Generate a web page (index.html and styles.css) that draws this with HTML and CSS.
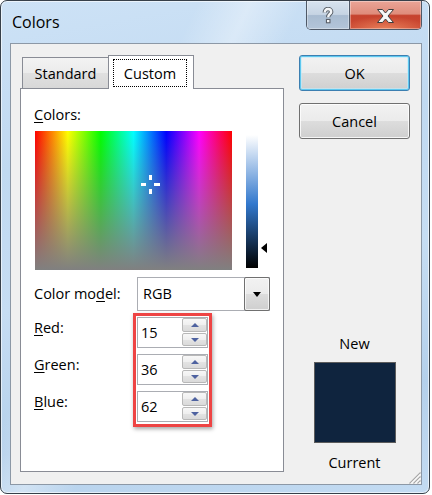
FILE: index.html
```html
<!DOCTYPE html>
<html>
<head>
<meta charset="utf-8">
<title>Colors</title>
<link rel="stylesheet" href="styles.css">
</head>
<body>
<div class="window">
  <div class="titlebar">
    <div class="title">Colors</div>
    <div class="caption">
      <div class="cbtn help">
        <svg width="12" height="17" viewBox="0 0 12 17">
          <path d="M2.8 5.6 C2.8 3.2 4.4 2 6 2 C7.9 2 9.2 3.2 9.2 4.9 C9.2 6.9 6.2 7.2 6.2 10.2" fill="none" stroke="#5a6068" stroke-width="4.4" stroke-linejoin="round"/>
          <rect x="3.9" y="11.9" width="4.6" height="4.4" fill="#5a6068"/>
          <path d="M2.8 5.6 C2.8 3.2 4.4 2 6 2 C7.9 2 9.2 3.2 9.2 4.9 C9.2 6.9 6.2 7.2 6.2 10.2" fill="none" stroke="#f4f6f8" stroke-width="2.4" stroke-linejoin="round"/>
          <rect x="5" y="13" width="2.4" height="2.2" fill="#f4f6f8"/>
        </svg>
      </div>
      <div class="cbtn close">
        <svg width="19" height="16" viewBox="0 0 19 16">
          <polygon points="1.5,1.5 6.5,1.5 9.5,5 12.5,1.5 17.5,1.5 12,8 17.5,14.5 12.5,14.5 9.5,11 6.5,14.5 1.5,14.5 7,8" fill="#f6f6f6" stroke="#3e3e3e" stroke-width="1" stroke-linejoin="round"/>
        </svg>
      </div>
    </div>
  </div>
  <div class="client">
    <div class="tabctl">
      <div class="tabs">
        <div class="tab">Standard</div>
        <div class="tab sel"><span class="focus">Custom</span></div>
      </div>
      <div class="panel">
        <div class="clabel"><u>C</u>olors:</div>
        <div class="picker">
          <div class="spectrum">
            <svg class="cross" width="19" height="19" viewBox="0 0 19 19">
              <rect x="8" y="0" width="3" height="5" fill="#fff"/>
              <rect x="8" y="14" width="3" height="5" fill="#fff"/>
              <rect x="0" y="8" width="5" height="3" fill="#fff"/>
              <rect x="13" y="8" width="6" height="3" fill="#fff"/>
            </svg>
          </div>
          <div class="lum"></div>
          <div class="arrow"></div>
        </div>
        <div class="model">
          <div class="mlabel">Color mo<u>d</u>el:</div>
          <div class="combo"><span class="cval">RGB</span><div class="dd"><i></i></div></div>
        </div>
        <div class="rgb">
          <div class="labels">
            <div class="lrow"><u>R</u>ed:</div>
            <div class="lrow"><u>G</u>reen:</div>
            <div class="lrow"><u>B</u>lue:</div>
          </div>
          <div class="hl">
            <div class="spin"><span class="sval">15</span><div class="sbtns"><div class="sb up"><i></i></div><div class="sb dn"><i></i></div></div></div>
            <div class="spin"><span class="sval">36</span><div class="sbtns"><div class="sb up"><i></i></div><div class="sb dn"><i></i></div></div></div>
            <div class="spin"><span class="sval">62</span><div class="sbtns"><div class="sb up"><i></i></div><div class="sb dn"><i></i></div></div></div>
          </div>
        </div>
      </div>
    </div>
    <div class="side">
      <div class="btn ok">OK</div>
      <div class="btn cancel">Cancel</div>
      <div class="new">New</div>
      <div class="swatch"></div>
      <div class="cur">Current</div>
    </div>
    <svg class="grip" width="13" height="13" viewBox="0 0 13 13">
      <path d="M12.5 1.5 L1.5 12.5 M12.5 5.5 L5.5 12.5 M12.5 9.5 L9.5 12.5" stroke="#a9a9a9" stroke-width="1.2"/>
      <path d="M12.5 3 L3 12.5 M12.5 7 L7 12.5 M12.5 11 L11 12.5" stroke="#ffffff" stroke-width="1"/>
    </svg>
  </div>
</div>
</body>
</html>
```

FILE: styles.css
```css
* { box-sizing: border-box; }
html, body { margin: 0; padding: 0; background: #ffffff; }
body {
  font-family: "Open Sans", "Noto Sans", sans-serif;
  font-size: 14.5px;
  line-height: 20px;
  color: #000;
}
u { text-decoration: underline; text-decoration-thickness: 1px; text-underline-offset: 2px; }

.window {
  width: 430px;
  height: 494px;
  border: 1px solid #37404a;
  border-radius: 7px;
  background:
    linear-gradient(115deg, rgba(255,255,255,0) 30%, rgba(255,255,255,.35) 38%, rgba(255,255,255,0) 46%),
    linear-gradient(170deg, #cde2f6 0%, #c0d9f1 30%, #c6ddf3 55%, #b4d0eb 80%, #c3dbf2 100%);
  box-shadow: inset 0 0 0 1px rgba(255,255,255,.6);
  display: flex;
  flex-direction: column;
  overflow: hidden;
}

.titlebar {
  height: 42px;
  flex: none;
  display: flex;
  justify-content: space-between;
  align-items: flex-start;
}
.title {
  font-size: 16px;
  line-height: 22px;
  margin: 10px 0 0 11px;
}
.caption {
  display: flex;
  height: 29px;
  margin-right: 7px;
  border: 1px solid #4f5967;
  border-top: none;
  border-radius: 0 0 5px 5px;
  overflow: hidden;
}
.cbtn {
  display: flex;
  align-items: center;
  justify-content: center;
  box-shadow: inset 0 0 0 1px rgba(255,255,255,.35);
}
.help {
  width: 42px;
  background: linear-gradient(#d7e3ef 0%, #c6d4e3 48%, #a9bcd1 52%, #b3c5d9 100%);
}
.close {
  width: 72px;
  border-left: 1px solid #4f5967;
  background:
    radial-gradient(ellipse 60% 45% at 50% 100%, rgba(255,170,120,.55), rgba(255,170,120,0)),
    linear-gradient(#eaa597 0%, #df8c7b 46%, #c6432e 52%, #cc4a33 100%);
}
.close svg { margin-top: 1px; }

.client {
  flex: 1;
  margin: 0 7px 8px 9px;
  border: 1px solid #8c98a6;
  background: #f0f0f0;
  display: flex;
  align-items: flex-start;
  padding: 11px 0 0 9px;
  position: relative;
}

.tabctl { width: 264px; display: flex; flex-direction: column; }
.tabs {
  height: 33px;
  display: flex;
  align-items: flex-end;
  padding-left: 2px;
}
.tab {
  width: 86px;
  height: 31px;
  border: 1px solid #898c95;
  border-bottom: none;
  border-right: none;
  background: linear-gradient(#f3f3f3 0%, #ebebeb 50%, #e0e0e0 50%, #d8d8d8 100%);
  text-align: center;
  padding-top: 6px;
}
.tab.sel {
  height: 34px;
  border-right: 1px solid #898c95;
  background: #ffffff;
  margin-bottom: -1px;
  position: relative;
  z-index: 1;
  padding: 3px 6px 0 4px;
}
.focus {
  display: block;
  height: 28px;
  border: 1px dotted #000;
  padding-top: 4px;
  text-align: center;
}

.panel {
  height: 384px;
  border: 1px solid #898c95;
  background: #ffffff;
}
.clabel { padding: 16px 0 0 13px; }
.picker {
  display: flex;
  align-items: flex-start;
  margin: 6px 0 0 14px;
}
.spectrum {
  width: 197px;
  height: 139px;
  position: relative;
  background:
    linear-gradient(to bottom, rgba(128,128,128,0), #808080),
    linear-gradient(to right, #ff0000 0%, #ffff00 16.67%, #00ff00 33.33%, #00ffff 50%, #0000ff 66.67%, #ff00ff 83.33%, #ff0000 100%);
}
.cross { position: absolute; left: 106px; top: 44px; display: block; }
.lum {
  width: 12px;
  height: 133px;
  margin: 4px 0 0 14px;
  background: linear-gradient(to bottom, #ffffff 0%, #3278cd 52%, #000000 100%);
}
.arrow {
  width: 0;
  height: 0;
  margin: 112px 0 0 3px;
  border-right: 6px solid #000;
  border-top: 5px solid transparent;
  border-bottom: 5px solid transparent;
}

.model {
  display: flex;
  align-items: center;
  margin: 7px 0 0 13px;
}
.mlabel { width: 103px; }
.combo {
  width: 133px;
  height: 34px;
  border: 1px solid #abadb3;
  background: #fff;
  display: flex;
  align-items: center;
}
.cval { flex: 1; padding-left: 5px; }
.dd {
  width: 26px;
  align-self: stretch;
  margin: -1px -1px -1px 0;
  border: 1px solid #707070;
  border-radius: 2px;
  background: linear-gradient(#f2f2f2 0%, #ebebeb 50%, #dddddd 50%, #cfcfcf 100%);
  box-shadow: inset 0 0 0 1px rgba(255,255,255,.7);
  display: flex;
  align-items: center;
  justify-content: center;
}
.dd i {
  display: block;
  width: 0;
  height: 0;
  border-top: 5px solid #000;
  border-left: 4.5px solid transparent;
  border-right: 4.5px solid transparent;
}

.rgb {
  display: flex;
  align-items: flex-start;
  margin: 2px 0 0 13px;
}
.labels { width: 99px; padding-top: 5px; }
.lrow { height: 37px; }
.hl {
  border: 3px solid #ee4444;
  padding: 1px 1px 2px 1px;
  display: flex;
  flex-direction: column;
  gap: 6px;
  box-shadow: 1px 2px 4px rgba(0,0,0,.35);
}
.spin {
  width: 71px;
  height: 31px;
  border: 1px solid #abadb3;
  background: #fff;
  display: flex;
  align-items: center;
  padding-left: 3px;
}
.sval { flex: 1; padding-top: 1px; }
.sbtns {
  width: 25px;
  align-self: stretch;
  display: flex;
  flex-direction: column;
  gap: 1px;
  padding-bottom: 1px;
}
.sb {
  border: 1px solid #b8b8b8;
  border-radius: 2px;
  background: linear-gradient(#f7f7f7 0%, #efefef 50%, #e3e3e3 50%, #dadada 100%);
  display: flex;
  align-items: center;
  justify-content: center;
}
.sb.up { height: 14px; }
.sb.dn { height: 13px; }
.sb i { display: block; width: 0; height: 0; border-left: 4px solid transparent; border-right: 4px solid transparent; }
.sb.up i { border-bottom: 4px solid #4e62a0; }
.sb.dn i { border-top: 4px solid #4e62a0; }

.side {
  width: 111px;
  margin-left: 15px;
  display: flex;
  flex-direction: column;
  align-items: center;
}
.btn {
  width: 111px;
  height: 36px;
  border: 1px solid #707070;
  border-radius: 3px;
  background: linear-gradient(#f2f2f2 0%, #ebebeb 50%, #dddddd 50%, #cfcfcf 100%);
  box-shadow: inset 0 0 0 1px rgba(255,255,255,.8);
  display: flex;
  align-items: center;
  justify-content: center;
  padding-top: 1px;
}
.btn.ok {
  border-color: #3c7fb1;
  box-shadow: inset 0 0 0 1px #5ec8ef, inset 0 0 0 2px rgba(190,235,252,.6);
}
.btn.cancel { margin-top: 12px; }
.new { margin-top: 195px; }
.swatch {
  width: 82px;
  height: 81px;
  margin-top: 8px;
  border: 1px solid #5c5c5c;
  background: #0f243e;
}
.cur { margin-top: 10px; }

.grip { position: absolute; right: 0; bottom: 0; display: block; }
```
